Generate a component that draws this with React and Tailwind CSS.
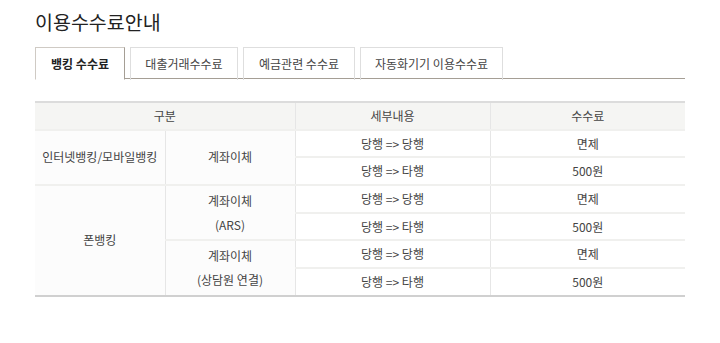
export default function App() {
  const tabs = [
    { label: "뱅킹 수수료", w: "w-[90px]", active: true },
    { label: "대출거래수수료", w: "w-[108px]" },
    { label: "예금관련 수수료", w: "w-[112px]" },
    { label: "자동화기기 이용수수료", w: "w-[143px]" },
  ];
  const font = { fontFamily: '"Noto Sans CJK KR", "Noto Sans", sans-serif' };
  const td = "h-[27.7px] p-0 text-center align-middle";
  return (
    <div className="w-[720px] h-[343px] bg-white text-[#444]" style={font}>
      <div className="pl-[35px] pt-[8px]">
        <h1 className="text-[19.5px] leading-[28px] text-[#222] font-normal">이용수수료안내</h1>
        <div className="mt-[11px] w-[650px] h-[32px] flex gap-[5px] border-b border-[#a59e95]">
          {tabs.map((t) => (
            <div
              key={t.label}
              className={`${t.w} h-[33px] -mb-px flex items-center justify-center text-[12px] border-t border-l ${
                t.active
                  ? "border-[#cfcac4] border-r border-r-[#a59e95] border-b border-b-white bg-white font-bold text-[#222]"
                  : "border-[#dedede] border-r border-r-[#dedede] text-[#444]"
              }`}
            >
              {t.label}
            </div>
          ))}
        </div>
        <table className="mt-[22px] w-[650px] border-collapse text-[12px] table-fixed">
          <colgroup>
            <col className="w-[130px]" />
            <col className="w-[130px]" />
            <col className="w-[195px]" />
            <col className="w-[195px]" />
          </colgroup>
          <thead>
            <tr className="bg-[#f5f5f3] border-t-2 border-[#dcdcdc]">
              <th colSpan={2} className={`${td} font-normal border-r border-[#e6e6e6]`}>구분</th>
              <th className={`${td} font-normal border-r border-[#e6e6e6]`}>세부내용</th>
              <th className={`${td} font-normal`}>수수료</th>
            </tr>
          </thead>
          <tbody>
            <tr className="border-t-2 border-[#f0f0ee]">
              <td rowSpan={2} className={`${td} bg-[#fcfcfc] border-r border-[#e6e6e6]`}>인터넷뱅킹/모바일뱅킹</td>
              <td rowSpan={2} className={`${td} bg-[#fcfcfc] border-r border-[#e6e6e6]`}>계좌이체</td>
              <td className={`${td} border-r border-[#e6e6e6]`}>당행 =&gt; 당행</td>
              <td className={td}>면제</td>
            </tr>
            <tr className="border-t-2 border-[#f0f0ee]">
              <td className={`${td} border-r border-[#e6e6e6]`}>당행 =&gt; 타행</td>
              <td className={td}>500원</td>
            </tr>
            <tr className="border-t-2 border-[#f0f0ee]">
              <td rowSpan={4} className={`${td} bg-[#fcfcfc] border-r border-[#e6e6e6]`}>폰뱅킹</td>
              <td rowSpan={2} className={`${td} bg-[#fcfcfc] border-r border-[#e6e6e6] leading-[24px]`}>계좌이체<br />(ARS)</td>
              <td className={`${td} border-r border-[#e6e6e6]`}>당행 =&gt; 당행</td>
              <td className={td}>면제</td>
            </tr>
            <tr className="border-t-2 border-[#f0f0ee]">
              <td className={`${td} border-r border-[#e6e6e6]`}>당행 =&gt; 타행</td>
              <td className={td}>500원</td>
            </tr>
            <tr className="border-t-2 border-[#f0f0ee]">
              <td rowSpan={2} className={`${td} bg-[#fcfcfc] border-r border-[#e6e6e6] leading-[24px]`}>계좌이체<br />(상담원 연결)</td>
              <td className={`${td} border-r border-[#e6e6e6]`}>당행 =&gt; 당행</td>
              <td className={td}>면제</td>
            </tr>
            <tr className="border-t-2 border-b-2 border-t-[#f0f0ee] border-b-[#d0d0d0]">
              <td className={`${td} border-r border-[#e6e6e6]`}>당행 =&gt; 타행</td>
              <td className={td}>500원</td>
            </tr>
          </tbody>
        </table>
      </div>
    </div>
  );
}
